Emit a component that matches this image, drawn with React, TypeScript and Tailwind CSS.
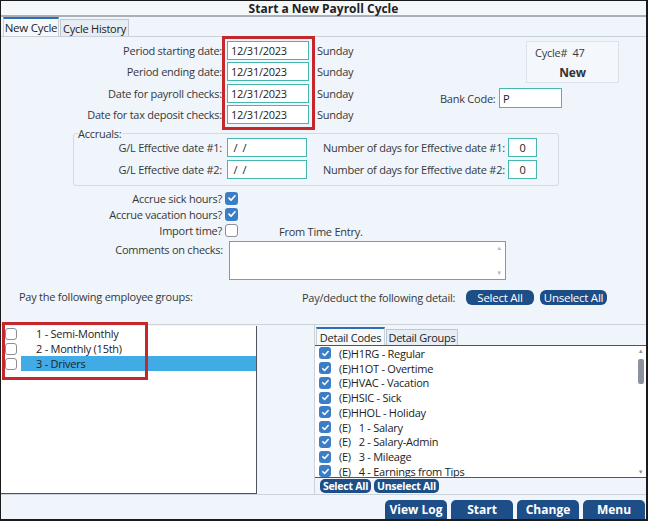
import React from "react";

function Check({ checked, size = 13 }: { checked: boolean; size?: number }) {
  if (checked) {
    return (
      <span
        className="flex shrink-0 items-center justify-center rounded-[3px] bg-[#3c7ec6]"
        style={{ width: size, height: size }}
      >
        <svg width={size - 3} height={size - 3} viewBox="0 0 10 10">
          <path d="M2 5.2l2 2 4-4.4" fill="none" stroke="#fff" strokeWidth="1.7" strokeLinecap="round" strokeLinejoin="round" />
        </svg>
      </span>
    );
  }
  return (
    <span
      className="block shrink-0 rounded-[3px] border border-[#8a8f96] bg-white"
      style={{ width: size, height: size }}
    />
  );
}

function Field({ value, className }: { value: string; className: string }) {
  return (
    <div className={"flex items-center whitespace-pre border border-[#45b6b0] bg-white pl-[3px] text-[#222] " + className}>
      {value}
    </div>
  );
}

function BlueButton({ label, className }: { label: string; className: string }) {
  return (
    <div className={"flex items-center justify-center bg-[#1d4e88] text-white " + className}>
      {label}
    </div>
  );
}

const dateRows = ["Period starting date:", "Period ending date:", "Date for payroll checks:", "Date for tax deposit checks:"];

const details = [
  "(E)H1RG - Regular",
  "(E)H1OT - Overtime",
  "(E)HVAC - Vacation",
  "(E)HSIC - Sick",
  "(E)HHOL - Holiday",
  "(E)   1 - Salary",
  "(E)   2 - Salary-Admin",
  "(E)   3 - Mileage",
  "(E)   4 - Earnings from Tips",
];

const groups = ["1 - Semi-Monthly", "2 - Monthly (15th)", "3 - Drivers"];

export default function App() {
  return (
    <div className="relative flex h-[521px] w-[648px] flex-col overflow-hidden whitespace-nowrap border-b-2 border-l border-r-2 border-t border-[#1a1a1a] bg-[#eff5fb] font-['Open_Sans',sans-serif] text-[11px] leading-[15px] tracking-[-0.25px] text-[#383838]">
      {/* title */}
      <div className="flex h-[16px] shrink-0 items-center justify-center border-b-2 border-[#a9b0b8] bg-[#f5f8fb] text-[12px] font-bold tracking-normal text-[#222]">
        Start a New Payroll Cycle
      </div>

      {/* tabs */}
      <div className="flex h-[20px] shrink-0 items-end border-b border-[#c8d0d9] pl-[2px]">
        <div className="flex h-[19px] w-[56px] items-center justify-center border-x border-t-2 border-[#c8d0d9] border-t-[#2c6db3] bg-[#f6f9fc] text-[11.5px] text-[#222]">
          New Cycle
        </div>
        <div className="ml-[1px] flex h-[17px] w-[69px] items-center justify-center border-x border-t border-[#bfc7d0] bg-[#e6edf4] text-[11px] text-[#222]">
          Cycle History
        </div>
      </div>

      {/* form */}
      <div className="flex min-h-0 flex-1 flex-col">
        <div className="flex pt-[4px]">
          <div className="flex w-[439px] flex-col gap-[2.4px]">
            {dateRows.map((l) => (
              <div key={l} className="flex h-[19px] items-center">
                <span className="w-[221px] text-right">{l}</span>
                <Field value="12/31/2023" className="ml-[5px] h-[19px] w-[82px]" />
                <span className="ml-[8px]">Sunday</span>
              </div>
            ))}
          </div>
          <div className="flex flex-col">
            <div className="ml-[86px] flex h-[42px] w-[93px] flex-col border border-[#dce2e9] bg-[#f4f8fc]">
              <span className="pl-[8px] pt-[3px]">Cycle#&nbsp; 47</span>
              <span className="mt-[5px] text-center text-[12px] font-bold text-[#333]">New</span>
            </div>
            <div className="mt-[5px] flex h-[20px] items-center">
              <span className="w-[59px]">Bank Code:</span>
              <Field value="P" className="h-[20px] w-[63px]" />
            </div>
          </div>
        </div>

        <fieldset className="ml-[72px] mt-[3px] w-[486px] rounded-[3px] border border-[#d3dae3] pb-[6px]">
          <legend className="ml-[4px] leading-[13px]">Accruals:</legend>
          <div className="-mt-[2px] flex flex-col gap-[3px]">
            {["1", "2"].map((n) => (
              <div key={n} className="flex h-[19px] items-center">
                <span className="w-[148px] text-right">G/L Effective date #{n}:</span>
                <Field value=" /  /" className="ml-[5px] h-[19px] w-[80px]" />
                <span className="ml-[16px] w-[181px] text-right">Number of days for Effective date #{n}:</span>
                <div className="ml-[4px] flex h-[19px] w-[29px] items-center justify-center border border-[#45b6b0] bg-white text-[#222]">
                  0
                </div>
              </div>
            ))}
          </div>
        </fieldset>

        <div className="mt-[4px] flex flex-col">
          <div className="flex h-[16px] items-center">
            <span className="w-[221px] text-right">Accrue sick hours?</span>
            <span className="ml-[3px]"><Check checked /></span>
          </div>
          <div className="flex h-[16px] items-center">
            <span className="w-[221px] text-right">Accrue vacation hours?</span>
            <span className="ml-[3px]"><Check checked /></span>
          </div>
          <div className="flex h-[16px] items-center">
            <span className="w-[221px] text-right">Import time?</span>
            <span className="ml-[3px]"><Check checked={false} /></span>
            <span className="ml-[41px] mt-[2px]">From Time Entry.</span>
          </div>
        </div>

        <div className="mt-[3px] flex">
          <span className="w-[222px] pt-[1px] text-right">Comments on checks:</span>
          <div className="ml-[6px] flex h-[39px] w-[277px] justify-end border border-[#45b6b0] bg-white pr-[3px]">
            <div className="flex flex-col justify-between py-[3px] text-[6px] leading-[6px] text-[#b5b9be]">
              <span>▲</span>
              <span>▼</span>
            </div>
          </div>
        </div>

        <div className="mt-[10px] flex h-[15px] items-center">
          <span className="mb-[3px] w-[301px] pl-[18px]">Pay the following employee groups:</span>
          <span className="w-[150px]">Pay/deduct the following detail:</span>
          <BlueButton label="Select All" className="ml-[14px] h-[15px] w-[68px] rounded-[6px] text-[11.5px]" />
          <BlueButton label="Unselect All" className="ml-[6px] h-[15px] w-[67px] rounded-[6px] text-[11.5px]" />
        </div>
      </div>

      {/* lower area */}
      <div className="flex h-[171px] shrink-0 border-y border-[#cbd2da]">
        <div className="mt-[1px] flex w-[256px] flex-col border-b border-r border-[#4d5660] bg-white pl-[1px]">
          {groups.map((g, i) => (
            <div key={g} className="flex h-[15px] items-center">
              <span className="ml-[3px]"><Check checked={false} size={12} /></span>
              <span className={"ml-[4px] flex h-[15px] flex-1 items-center pl-[15px] text-[#222] " + (i === 2 ? "bg-[#41abe6]" : "")}>
                {g}
              </span>
            </div>
          ))}
        </div>

        <div className="ml-[57px] flex flex-1 flex-col border-l border-[#cbd2da]">
          <div className="flex h-[20px] items-end pl-[1px] pt-[2px]">
            <div className="flex h-[18px] w-[69px] items-center justify-center border-x border-t-2 border-[#c8d0d9] border-t-[#2c6db3] bg-[#f6f9fc] text-[#222]">
              Detail Codes
            </div>
            <div className="ml-[1px] flex h-[16px] w-[72px] items-center justify-center border-x border-t border-[#bfc7d0] bg-[#e6edf4] text-[#222]">
              Detail Groups
            </div>
          </div>
          <div className="flex h-[133px] border-y border-[#4d5660] bg-white">
            <div className="flex flex-1 flex-col overflow-hidden pl-[4px]">
              {details.map((d) => (
                <div key={d} className="flex h-[14.75px] shrink-0 items-center">
                  <Check checked size={12} />
                  <span className="ml-[8px] whitespace-pre text-[#222]">{d}</span>
                </div>
              ))}
            </div>
            <div className="flex w-[11px] flex-col items-center py-[2px] text-[6px] leading-[6px] text-[#8e949c]">
              <span>▲</span>
              <span className="mt-[5px] h-[25px] w-[6px] rounded-[2px] bg-[#8c929d]" />
              <span className="mt-auto">▼</span>
            </div>
          </div>
          <div className="flex pl-[5px] pt-[1px]">
            <BlueButton label="Select All" className="h-[14px] w-[51px] rounded-[5px] text-[10.5px] font-bold" />
            <BlueButton label="Unselect All" className="ml-[3px] h-[14px] w-[65px] rounded-[5px] text-[10.5px] font-bold" />
          </div>
        </div>
      </div>

      {/* bottom bar */}
      <div className="flex h-[24px] shrink-0 items-end justify-end gap-[4px] pr-[1px]">
        {["View Log", "Start", "Change", "Menu"].map((b) => (
          <BlueButton key={b} label={b} className="h-[19px] w-[62px] rounded-t-[5px] text-[12px] font-bold tracking-normal" />
        ))}
      </div>

      {/* annotation highlights */}
      <div className="pointer-events-none absolute left-[221px] top-[35px] h-[94px] w-[93px] border-[3px] border-[#c4282c]" />
      <div className="pointer-events-none absolute left-[1px] top-[321px] h-[58px] w-[146px] border-[3px] border-[#c4282c]" />
    </div>
  );
}
